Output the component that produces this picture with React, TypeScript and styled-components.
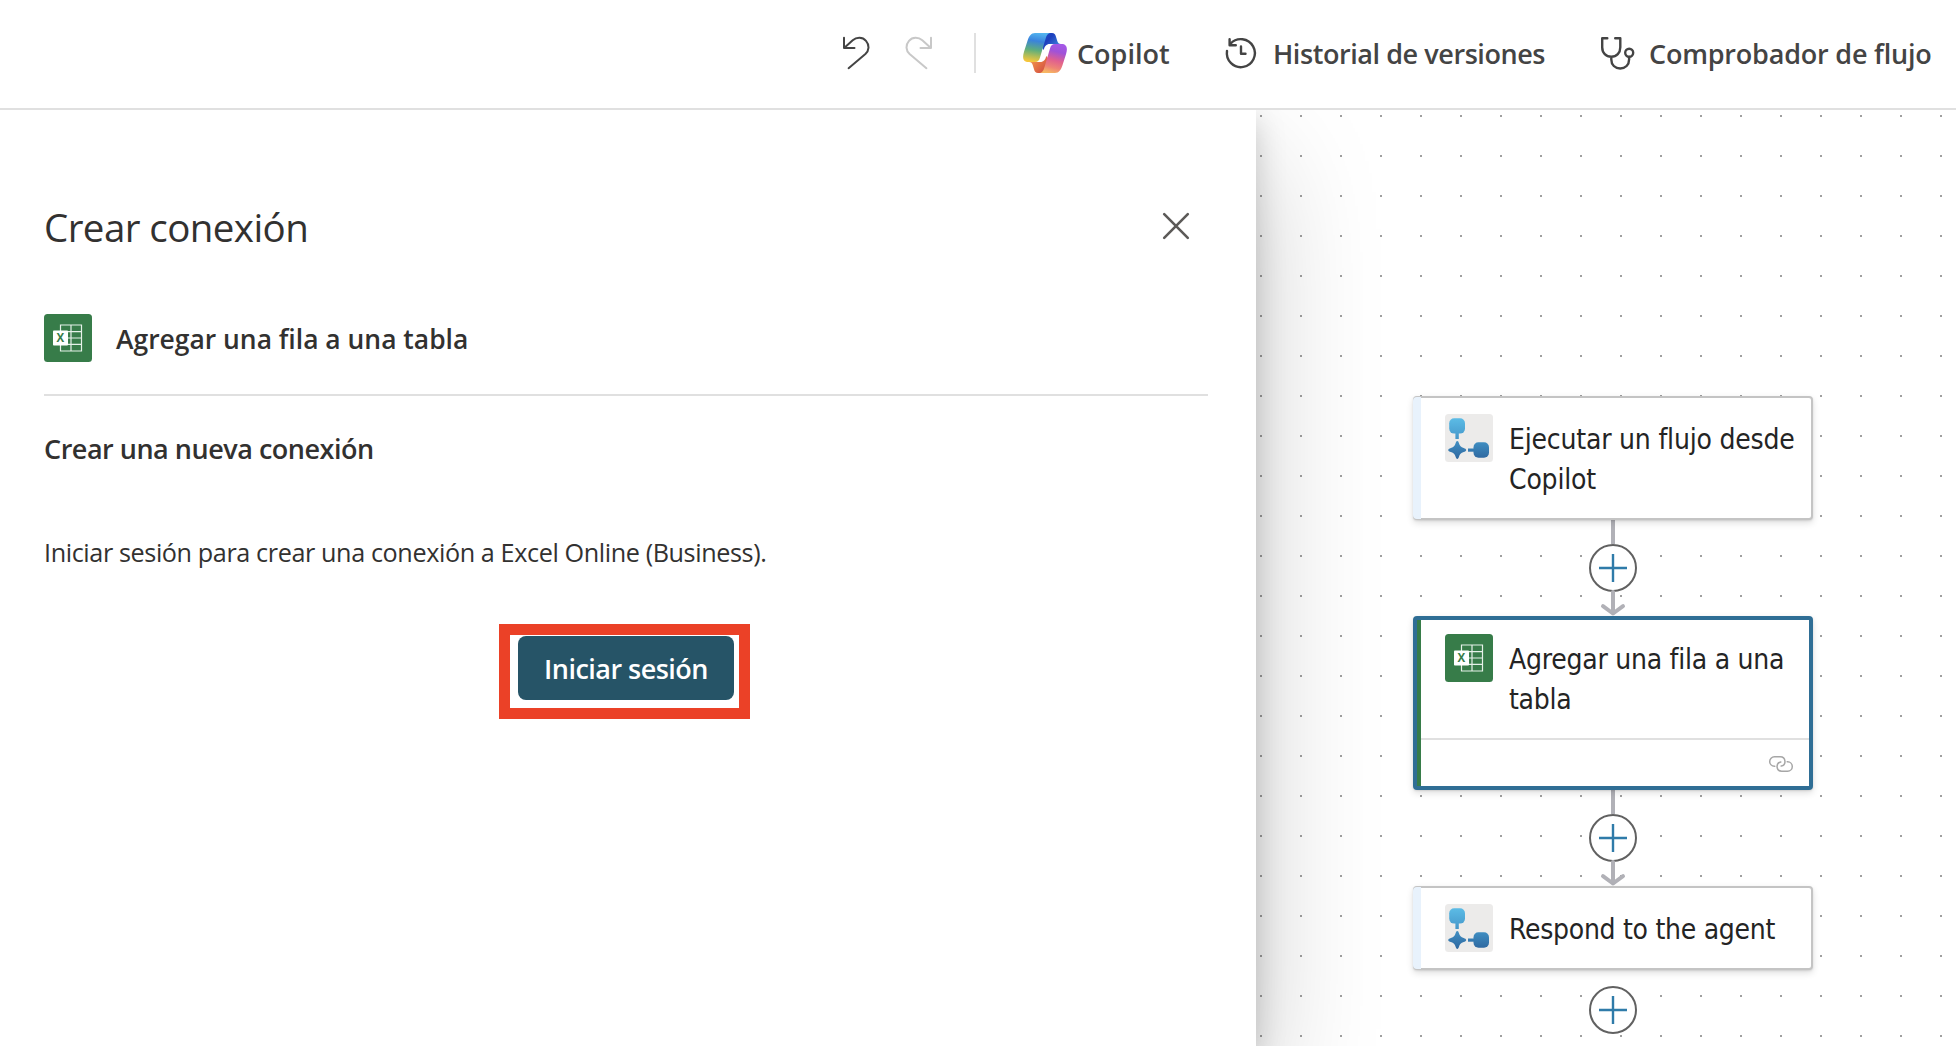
import React from 'react';
import styled, { createGlobalStyle } from 'styled-components';

const GlobalStyle = createGlobalStyle`
  *, *::before, *::after { box-sizing: border-box; }
  body { margin: 0; background: #fff; overflow: hidden; }
`;

const Page = styled.div`
  display: flex;
  flex-direction: column;
  width: 1956px;
  height: 1046px;
  background: #fff;
  overflow: hidden;
  font-family: 'Open Sans', 'Noto Sans', sans-serif;
`;

const Toolbar = styled.header`
  display: flex;
  align-items: flex-start;
  flex: none;
  height: 110px;
  padding: 37px 0 0 843px;
  border-bottom: 2px solid #e0e0e0;
  white-space: nowrap;
`;

const HistoryButtons = styled.div`
  display: flex;
  gap: 35px;
`;

const Divider = styled.span`
  width: 2px;
  height: 40px;
  margin: -4px 47px 0 42px;
  background: #e0e0e0;
`;

const Command = styled.div<{ $gap: number; $width: number }>`
  display: flex;
  flex: none;
  gap: ${(p) => p.$gap}px;
  width: ${(p) => p.$width}px;
`;

const CommandLabel = styled.span<{ $tracking: number }>`
  color: #444;
  font-size: 27px;
  font-weight: 600;
  line-height: 33px;
  letter-spacing: ${(p) => p.$tracking}px;
`;

const CopilotMark = styled.svg`
  flex: none;
  width: 44px;
  height: 40px;
  margin-top: -4px;
`;

const LineIcon = styled.svg<{ $color?: string }>`
  display: block;
  flex: none;
  overflow: visible;
  fill: none;
  stroke: ${(p) => p.$color ?? '#444'};
  stroke-width: 2;
  stroke-linecap: round;
  stroke-linejoin: round;
`;

const CloseIcon = styled(LineIcon)`
  margin-top: -2px;
`;

const Workspace = styled.main`
  display: flex;
  flex: 1;
  min-height: 0;
  overflow: hidden;
`;

const Panel = styled.section`
  position: relative;
  z-index: 1;
  display: flex;
  flex-direction: column;
  flex: none;
  width: 1256px;
  padding: 84px 48px 0 44px;
  background: #fff;
  box-shadow: 0 51px 115px rgba(0, 0, 0, 0.22), 0 10px 29px rgba(0, 0, 0, 0.18);
  color: #323130;
`;

const PanelHeader = styled.div`
  display: flex;
  justify-content: space-between;
  align-items: center;
  height: 66px;
  padding-right: 19px;
`;

const PanelTitle = styled.h1`
  margin: 0;
  font-size: 38.5px;
  font-weight: 400;
  letter-spacing: -0.57px;
  line-height: 66px;
`;

const Operation = styled.div`
  display: flex;
  align-items: center;
  gap: 24px;
  height: 84px;
  margin-top: 52px;
  padding: 2px 0 32px;
  border-bottom: 2px solid #e0e0e0;
`;

const OperationName = styled.span`
  padding-top: 1px;
  font-size: 26.45px;
  font-weight: 600;
  line-height: 40px;
`;

const SectionTitle = styled.h2`
  margin: 33px 0 0;
  font-size: 27px;
  font-weight: 600;
  letter-spacing: -0.48px;
  line-height: 40px;
`;

const Description = styled.p`
  margin: 63px 0 0;
  font-size: 25.2px;
  letter-spacing: -0.395px;
  line-height: 40px;
`;

const Highlight = styled.div`
  position: relative;
  align-self: center;
  margin-top: 64px;

  &::after {
    content: '';
    position: absolute;
    inset: -12.5px -16px -19px -19px;
    border: 11.5px solid #eb4127;
  }
`;

const SignInButton = styled.button`
  display: block;
  width: 216px;
  height: 64px;
  padding: 2px 0 0;
  border: 0;
  border-radius: 8px;
  background: #265467;
  color: #fff;
  font: 600 27px/62px 'Open Sans', 'Noto Sans', sans-serif;
  letter-spacing: -0.53px;
`;

const Canvas = styled.section`
  display: flex;
  flex: 1;
  flex-direction: column;
  align-items: center;
  padding: 286px 143px 0 157px;
  background: conic-gradient(from 0deg at 2px 2px, transparent 75%, #9f9f9f 0) 4px 5px / 40px 40px #fff;
`;

const Card = styled.article<{ $height: number; $selected?: boolean; $accent: string }>`
  position: relative;
  flex: none;
  display: flex;
  flex-direction: column;
  width: 400px;
  height: ${(p) => p.$height}px;
  border: ${(p) => (p.$selected ? '4px solid #2f6e95' : '2px solid #c4c4c4')};
  border-radius: 4px;
  background: #fff;
  box-shadow: 0 3px 7px rgba(0, 0, 0, 0.13), 0 1px 2px rgba(0, 0, 0, 0.1);

  &::before {
    content: '';
    position: absolute;
    left: ${(p) => (p.$selected ? 0 : -2)}px;
    top: ${(p) => (p.$selected ? 0 : -1)}px;
    bottom: ${(p) => (p.$selected ? 0 : -1)}px;
    width: ${(p) => (p.$selected ? 4 : 8)}px;
    border-radius: ${(p) => (p.$selected ? '0' : '4px 0 0 4px')};
    background: ${(p) => p.$accent};
  }
`;

const CardBody = styled.div<{ $selected?: boolean }>`
  display: flex;
  flex: 1;
  gap: 16px;
  padding: ${(p) => (p.$selected ? '14px 0 0 28px' : '16px 0 0 30px')};
`;

const CardTitle = styled.div<{ $tracking: number }>`
  padding-top: 6px;
  color: #242424;
  font-family: 'DejaVu Sans Condensed', 'DejaVu Sans', sans-serif;
  font-stretch: condensed;
  font-size: 28px;
  line-height: 40px;
  letter-spacing: ${(p) => p.$tracking}px;
  white-space: nowrap;
`;

const CardFooter = styled.div`
  display: flex;
  justify-content: flex-end;
  height: 48px;
  margin-left: 4px;
  padding: 16px 16px 0 0;
  border-top: 2px solid #e0e0e0;
`;

const Connector = styled.div`
  display: flex;
  flex: none;
  flex-direction: column;
  align-items: center;
  height: 96px;
`;

const Edge = styled.span`
  width: 4px;
  height: 24px;
  background: #b1b1b7;
`;

const AddButton = styled.button<{ $last?: boolean }>`
  display: flex;
  flex: none;
  align-items: center;
  justify-content: center;
  width: 48px;
  height: 48px;
  margin: ${(p) => (p.$last ? '16px 0 0' : '0')};
  padding: 0;
  border: 2px solid #616161;
  border-radius: 50%;
  background: #fff;
`;

const Tile = styled.svg`
  display: block;
  flex: none;
  width: 48px;
  height: 48px;
`;

const CopilotLogo = () => (
  <CopilotMark viewBox="0 0 44 40">
    <defs>
      <linearGradient id="cpLeft" x1="0.55" y1="0" x2="0.4" y2="1">
        <stop offset="0" stopColor="#52b4ef" />
        <stop offset="0.28" stopColor="#3a83dc" />
        <stop offset="0.6" stopColor="#5fae7c" />
        <stop offset="0.82" stopColor="#b5bd55" />
        <stop offset="1" stopColor="#f6c63c" />
      </linearGradient>
      <linearGradient id="cpRight" x1="0.65" y1="0" x2="0.4" y2="1">
        <stop offset="0" stopColor="#a458e6" />
        <stop offset="0.25" stopColor="#a052d8" />
        <stop offset="0.55" stopColor="#e0608f" />
        <stop offset="0.8" stopColor="#ee8375" />
        <stop offset="1" stopColor="#f7b763" />
      </linearGradient>
      <linearGradient id="cpTop" x1="0" y1="0" x2="1" y2="0.7">
        <stop offset="0" stopColor="#2054cc" />
        <stop offset="0.45" stopColor="#1d3fbd" />
        <stop offset="1" stopColor="#3f86dd" />
      </linearGradient>
      <linearGradient id="cpBottom" x1="0" y1="0" x2="1" y2="0.7">
        <stop offset="0" stopColor="#f2a654" />
        <stop offset="0.5" stopColor="#e67746" />
        <stop offset="1" stopColor="#cf4a42" />
      </linearGradient>
    </defs>
    <path d="M20 0h9c2.400 0 3.300 1.500 3.900 3.500l1.400 4.500c.6 2 1.600 3 3.700 3H27c-4 0-5.300 2.500-6.300 6L17 12z" fill="url(#cpTop)" />
    <path d="M24 40h-9c-2.400 0-3.300-1.500-3.900-3.500l-1.400-4.500c-.6-2-1.600-3-3.700-3h11c4 0 5.300-2.500 6.300-6L27 28z" fill="url(#cpBottom)" />
    <path d="M28 0H12C8 0 6 3.200 4.600 7.500L1 18.700C-1 25 .3 29 5.500 29H12c3 0 4.200-1.700 5-4.500L22.500 6C23.600 2.400 24.600 0 28 0z" fill="url(#cpLeft)" />
    <path d="M16 40h16c4 0 6-3.200 7.400-7.500L43 21.300C45 15 43.700 11 38.500 11H32c-3 0-4.200 1.700-5 4.500L21.500 34C20.400 37.600 19.400 40 16 40z" fill="url(#cpRight)" />
  </CopilotMark>
);

const UndoGlyph = () => <path d="M1 .8V11h10.500M1.400 10.800l8.300-7.500C13.500 0 19.500-.2 23 3.800c3.700 4.200 3.200 9.700-.6 13.200L5.600 31.200" />;

const ExcelTile = () => (
  <Tile viewBox="0 0 48 48">
    <rect width="48" height="48" rx="3.500" fill="#377c49" />
    <path d="M16.500 11H37.500V37H16.500zM27 11V37M16.500 17.600h21M16.500 24h21M16.500 30.300h21" fill="none" stroke="#e6f1e9" strokeWidth="1.200" />
    <rect x="9" y="16.500" width="15" height="15" rx="0.800" fill="#fff" />
    <text x="16.400" y="28" textAnchor="middle" fontFamily="Open Sans" fontSize="11.500" fontWeight="700" fill="#377c49">X</text>
  </Tile>
);

const FlowTile = () => (
  <Tile viewBox="0 0 48 48">
    <defs>
      <linearGradient id="flowBlue" gradientUnits="userSpaceOnUse" x1="0" y1="4" x2="0" y2="45">
        <stop offset="0" stopColor="#5cbce6" />
        <stop offset="0.4" stopColor="#4a9fd0" />
        <stop offset="0.7" stopColor="#3a83b8" />
        <stop offset="1" stopColor="#2f679f" />
      </linearGradient>
    </defs>
    <rect width="48" height="48" rx="3.500" fill="#ecebea" />
    <g fill="url(#flowBlue)">
      <rect x="4.200" y="4.200" width="15.800" height="15.400" rx="5" />
      <rect x="10.400" y="19" width="3.400" height="6" />
      <path d="M12.300 27c.9 0 1.200.8 1.600 1.900 1 3 1.900 3.900 4.800 5 1.400.5 2.500 1 2.500 2.100s-1.100 1.600-2.500 2.100c-2.900 1.100-3.800 2-4.800 5-.4 1.100-.7 1.900-1.600 1.900s-1.200-.8-1.600-1.900c-1-3-1.900-3.900-4.800-5C4.500 37.600 3.200 37.100 3.200 36s1.300-1.600 2.700-2.100c2.900-1.100 3.800-2 4.800-5 .4-1.100.7-1.900 1.600-1.900z" />
      <rect x="23" y="34.500" width="7" height="3.200" />
      <rect x="28.500" y="28.300" width="15.500" height="15.400" rx="5" />
    </g>
  </Tile>
);

const Plus = () => (
  <LineIcon width="28" height="28" viewBox="0 0 28 28" $color="#2f7ba9">
    <path d="M14 0V28M0 14H28" strokeLinecap="butt" strokeWidth="2.400" />
  </LineIcon>
);

const ArrowDown = () => (
  <LineIcon width="24" height="24" viewBox="0 0 24 24" $color="#b1b1b7">
    <path d="M12 0V21.500M2 14.200l10 7.300 10-7.300" strokeWidth="4" />
  </LineIcon>
);

const Step = () => (
  <Connector>
    <Edge />
    <AddButton><Plus /></AddButton>
    <ArrowDown />
  </Connector>
);

export default function App() {
  return (
    <Page>
      <GlobalStyle />
      <Toolbar>
        <HistoryButtons>
          <LineIcon width="27" height="32" viewBox="0 0 27 32"><UndoGlyph /></LineIcon>
          <LineIcon width="27" height="32" viewBox="0 0 27 32" $color="#c8c8c8">
            <g transform="translate(27 0) scale(-1 1)"><UndoGlyph /></g>
          </LineIcon>
        </HistoryButtons>
        <Divider />
        <Command $gap={10} $width={202}>
          <CopilotLogo />
          <CommandLabel $tracking={0}>Copilot</CommandLabel>
        </Command>
        <Command $gap={17} $width={376}>
          <LineIcon width="31" height="32" viewBox="-1 -1 31 32">
            <path
              d="M1 13A14 14 0 1 0 4.500 5.700L3.600 6.800M3.600 1.200V7.200H9.800M15 8.500V15.700H19.500"
              strokeWidth="2.400"
            />
          </LineIcon>
          <CommandLabel $tracking={-0.43}>Historial de versiones</CommandLabel>
        </Command>
        <Command $gap={14} $width={340}>
          <LineIcon width="34" height="33" viewBox="0 0 34 33">
            <g strokeWidth="2.400">
              <path d="M6.300 1.200H1.200V10.300C1.200 16 5 19.800 10.300 19.800S19.300 16 19.300 10.300V1.200H14.200M10.300 20v2.500c0 5.300 3.700 9 8.900 9s8.900-3.700 8.900-9v-2.600" />
              <circle cx="28.200" cy="15.700" r="4" />
            </g>
          </LineIcon>
          <CommandLabel $tracking={-0.2}>Comprobador de flujo</CommandLabel>
        </Command>
      </Toolbar>

      <Workspace>
        <Panel>
          <PanelHeader>
            <PanelTitle>Crear conexión</PanelTitle>
            <CloseIcon width="26" height="26" viewBox="0 0 26 26" $color="#5c5a58">
              <path d="M1.200 1.200l23.600 23.600M24.800 1.200L1.200 24.800" strokeWidth="2.600" />
            </CloseIcon>
          </PanelHeader>
          <Operation>
            <ExcelTile />
            <OperationName>Agregar una fila a una tabla</OperationName>
          </Operation>
          <SectionTitle>Crear una nueva conexión</SectionTitle>
          <Description>Iniciar sesión para crear una conexión a Excel Online (Business).</Description>
          <Highlight>
            <SignInButton>Iniciar sesión</SignInButton>
          </Highlight>
        </Panel>

        <Canvas>
          <Card $height={124} $accent="#e8f2fc">
            <CardBody>
              <FlowTile />
              <CardTitle $tracking={-0.2}>Ejecutar un flujo desde<br />Copilot</CardTitle>
            </CardBody>
          </Card>
          <Step />
          <Card $height={174} $selected $accent="#377c49">
            <CardBody $selected>
              <ExcelTile />
              <CardTitle $tracking={-0.25}>Agregar una fila a una<br />tabla</CardTitle>
            </CardBody>
            <CardFooter>
              <LineIcon width="24" height="16" viewBox="0 0 24 16" $color="#a6a6a6">
                <path
                  d="M5.800 10.200h-.4A4.700 4.700 0 0 1 5.400.8h5.900a4.700 4.700 0 0 1 .9 9.300M18.200 5.800h.4a4.700 4.700 0 0 1 0 9.400h-5.900a4.700 4.700 0 0 1-.9-9.300"
                  strokeWidth="1.500"
                />
              </LineIcon>
            </CardFooter>
          </Card>
          <Step />
          <Card $height={84} $accent="#e8f2fc">
            <CardBody>
              <FlowTile />
              <CardTitle $tracking={-0.28}>Respond to the agent</CardTitle>
            </CardBody>
          </Card>
          <AddButton $last><Plus /></AddButton>
        </Canvas>
      </Workspace>
    </Page>
  );
}
